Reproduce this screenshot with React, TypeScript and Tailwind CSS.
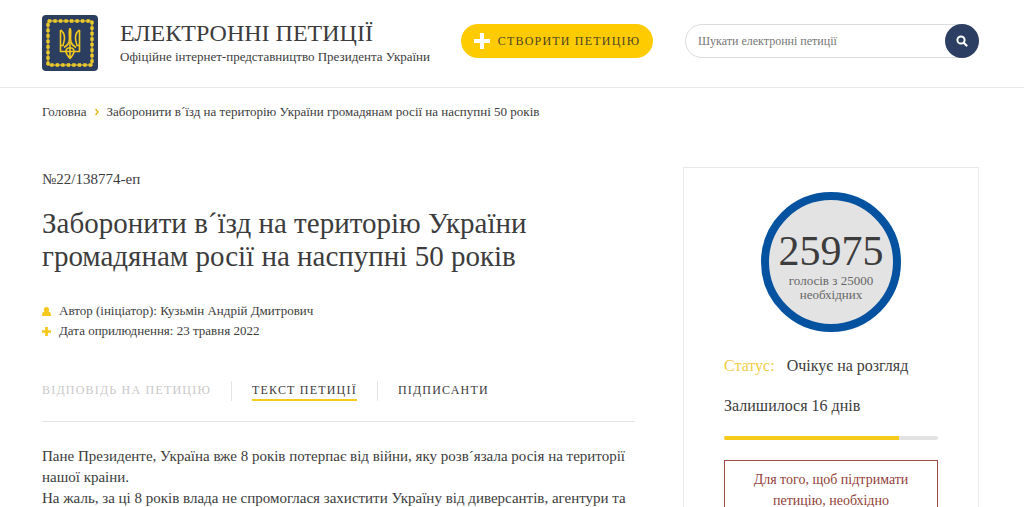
import type { ReactNode } from "react"

const tabs = [
  { label: "Відповідь на петицію", disabled: true },
  { label: "Текст петиції", active: true },
  { label: "Підписанти" },
]

const title = "Заборонити в´їзд на територію України громадянам росії на наспупні 50 років"
const votes = { current: 25975, required: 25000 }
const progress = 82

function Emblem() {
  return (
    <svg viewBox="0 0 56 56" className="size-14 shrink-0" aria-hidden="true">
      <rect width="56" height="56" rx="4" fill="#2c3e60" />
      <rect x="6" y="6" width="44" height="44" fill="none" stroke="#a89438" strokeWidth="2" />
      <rect
        x="6"
        y="6"
        width="44"
        height="44"
        fill="none"
        stroke="#ecca2a"
        strokeWidth="3.4"
        strokeDasharray="3.2 2.3"
      />
      <g fill="none" stroke="#f2c81c" strokeWidth="1.6" strokeLinejoin="round">
        <path d="M18.5 15v21.5H24M37.5 15v21.5H32" />
        <path d="M18.5 15c3 2 4 4.5 4 8 0 3-1 5-1.5 7.5h-2.5M37.5 15c-3 2-4 4.5-4 8 0 3 1 5 1.5 7.5h2.5" />
        <path d="M28 13.5c-2 3 .5 8-1 13.5-.8 3-2.5 4-5 5.5M28 13.5c2 3-.5 8 1 13.5.8 3 2.5 4 5 5.5" />
        <path d="M24 36.5c0-5 8-5 8 0 0 2.5-2 4.5-4 7-2-2.5-4-4.5-4-7zM28 27v16M24 36.5h8" />
      </g>
    </svg>
  )
}

function MetaRow({ icon, children }: { icon: ReactNode; children: ReactNode }) {
  return (
    <li className="flex items-center gap-2">
      <svg viewBox="0 0 10 10" className="size-[9px] shrink-0 fill-[#f5c71a]" aria-hidden="true">
        {icon}
      </svg>
      <span>{children}</span>
    </li>
  )
}

function Header() {
  return (
    <header className="flex items-center border-b border-[#e9e9e9] pt-[15px] pr-[45px] pb-4 pl-[42px]">
      <Emblem />
      <div className="ml-[22px] shrink-0 whitespace-nowrap">
        <a href="#" className="block text-2xl leading-7">
          ЕЛЕКТРОННІ ПЕТИЦІЇ
        </a>
        <p className="text-[13px] leading-5">Офіційне інтернет-представництво Президента України</p>
      </div>
      <div className="ml-auto flex shrink-0 items-center gap-8 pb-1">
        <button
          type="button"
          className="flex h-[34px] w-48 items-center justify-center gap-2 rounded-full bg-[#fecb00] text-xs tracking-widest whitespace-nowrap text-[#4d4422] uppercase"
        >
          <svg viewBox="0 0 16 16" className="size-4 fill-white" aria-hidden="true">
            <path d="M6 0h4v6h6v4h-6v6H6v-6H0V6h6z" />
          </svg>
          Створити петицію
        </button>
        <form className="flex w-[294px] rounded-full border border-[#dcdcdc]" role="search">
          <input
            type="search"
            aria-label="Шукати електронні петиції"
            placeholder="Шукати електронні петиції"
            className="min-w-0 flex-1 rounded-full bg-transparent pl-3 text-xs outline-none placeholder:text-[#777777]"
          />
          <button
            type="button"
            aria-label="Шукати"
            className="-my-px -mr-px flex size-[34px] items-center justify-center rounded-full bg-[#2c3e62]"
          >
            <svg viewBox="0 0 12 12" className="size-3" fill="none" stroke="#ffffff" aria-hidden="true">
              <circle cx="5" cy="5" r="3.6" strokeWidth="2" />
              <path d="M8 8l2.5 2.5" strokeWidth="2.2" strokeLinecap="round" />
            </svg>
          </button>
        </form>
      </div>
    </header>
  )
}

function Tabs() {
  return (
    <nav className="mt-10 border-b border-[#e5e5e5] pb-5">
      <ul className="flex items-center text-xs leading-[18px] tracking-widest whitespace-nowrap uppercase">
        {tabs.map((tab) => (
          <li
            key={tab.label}
            className="border-r border-[#e5e5e5] px-5 first:pl-0 last:border-r-0"
          >
            <a
              href="#"
              aria-disabled={tab.disabled}
              aria-current={tab.active ? "page" : undefined}
              className={`block border-b-2 ${tab.active ? "border-[#f5cb1c]" : "border-transparent"} ${
                tab.disabled ? "text-[#c9c9c9]" : ""
              }`}
            >
              {tab.label}
            </a>
          </li>
        ))}
      </ul>
    </nav>
  )
}

function VoteCard() {
  return (
    <aside className="w-74 shrink-0 border border-[#e9e9e9] px-10 pt-6 pb-10">
      <div className="mx-auto flex size-[140px] flex-col items-center rounded-full border-8 border-[#0553a0] bg-[#e3e3e3] pt-7 text-center">
        <span className="text-[42px] leading-[46px]">{votes.current}</span>
        <span className="text-[13px] leading-[14px] text-[#666666]">
          голосів з {votes.required}
          <br />
          необхідних
        </span>
      </div>
      <p className="mt-6 flex gap-3 text-base leading-5 whitespace-nowrap">
        <span className="text-[#f0cd4a]">Статус:</span>
        <span>Очікує на розгляд</span>
      </p>
      <p className="mt-5 text-base leading-5">Залишилося 16 днів</p>
      <div className="mt-5 h-1 overflow-hidden rounded-full bg-[#e3e3e3]">
        <div className="h-full bg-[#f5cb1c]" style={{ width: `${progress}%` }} />
      </div>
      <p className="mt-5 border border-[#9c4a44] px-5 py-2 text-center text-sm leading-[21px] text-[#933f39]">
        Для того, щоб підтримати петицію, необхідно
      </p>
    </aside>
  )
}

export default function App() {
  return (
    <div className="bg-white font-['Liberation_Serif',serif] text-[#3c3c3c]">
      <Header />
      <nav className="flex items-center gap-2 pt-4 pl-[42px] text-[13px] leading-4">
        <a href="#">Головна</a>
        <svg viewBox="0 0 4 8" className="h-2 w-1" fill="none" stroke="#e6b81a" strokeWidth="1.4" aria-hidden="true">
          <path d="M.5 1l2.5 3L.5 7" />
        </svg>
        <span>{title}</span>
      </nav>
      <div className="flex items-start gap-12 pt-[47px] pr-[45px] pl-[42px]">
        <main className="min-w-0 flex-1">
          <p className="pt-0.5 text-[15px] leading-5">№22/138774-еп</p>
          <h1 className="mt-[18px] text-[29px] leading-[33px]">{title}</h1>
          <ul className="mt-7 text-[13px] leading-5">
            <MetaRow icon={<path d="M5 0a2.7 2.7 0 0 1 2 4.7C9 5 10 6.5 10 10H0C0 6.5 1 5 3 4.7A2.7 2.7 0 0 1 5 0z" />}>
              Автор (ініціатор): Кузьмін Андрій Дмитрович
            </MetaRow>
            <MetaRow icon={<path d="M3.5 0h3v3.5H10v3H6.5V10h-3V6.5H0v-3h3.5z" />}>
              Дата оприлюднення: 23 травня 2022
            </MetaRow>
          </ul>
          <Tabs />
          <div className="mt-6 text-[15px] leading-[21px]">
            <p>Пане Президенте, Україна вже 8 років потерпає від війни, яку розв´язала росія на території нашої краіни.</p>
            <p>На жаль, за ці 8 років влада не спромоглася захистити Україну від диверсантів, агентури та</p>
          </div>
        </main>
        <VoteCard />
      </div>
    </div>
  )
}
